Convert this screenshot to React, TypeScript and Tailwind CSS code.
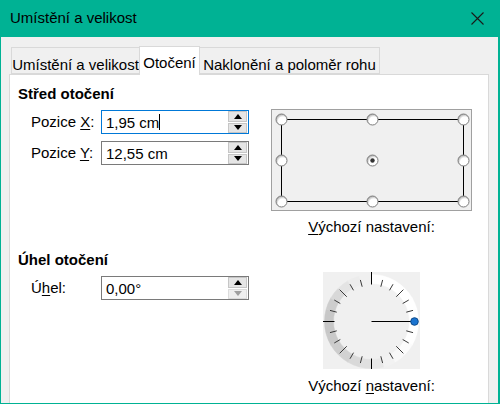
import React from 'react';

const FONT = { fontFamily: '"Liberation Sans", Arial, sans-serif' };

function SpinBox({ value, focused, caret, downDisabled }: { value: string; focused?: boolean; caret?: boolean; downDisabled?: boolean }) {
  return (
    <div
      className={`relative w-[148px] h-[24px] bg-white border flex items-center pl-[4px] ${
        focused ? 'border-[#0078d7]' : 'border-[#7a7a7a]'
      }`}
    >
      <span className="text-[15px] leading-none text-black">{value}</span>
      {caret && <span className="w-px h-[16px] bg-black" />}
      <div className="absolute right-px top-0 bottom-0 w-[19px] flex flex-col gap-px">
        <div className="flex-1 bg-[#e5e5e5] border border-[#c6c6c6] flex items-center justify-center">
          <svg width="8" height="5" viewBox="0 0 8 5">
            <path d="M0 5 L4 0 L8 5 Z" fill="#000" />
          </svg>
        </div>
        <div
          className={`flex-1 border flex items-center justify-center ${
            downDisabled ? 'bg-[#efefef] border-[#dcdcdc]' : 'bg-[#e5e5e5] border-[#c6c6c6]'
          }`}
        >
          <svg width="8" height="5" viewBox="0 0 8 5">
            <path d="M0 0 L8 0 L4 5 Z" fill={downDisabled ? '#a0a0a0' : '#000'} />
          </svg>
        </div>
      </div>
    </div>
  );
}

function Handle({ x, y, center }: { x: number; y: number; center?: boolean }) {
  return (
    <g>
      <circle cx={x} cy={y} r={5.5} fill="url(#knob)" stroke="#7d7d7d" strokeWidth={1} />
      {center && <circle cx={x} cy={y} r={2.2} fill="#333" />}
    </g>
  );
}

function PositionPreview() {
  const xs = [9.5, 100.5, 191.5];
  const ys = [9.5, 50.5, 91.5];
  return (
    <div className="w-[201px] h-[102px] border border-[#a0a0a0] bg-[#f0f0f0]">
      <svg width="199" height="100" viewBox="0 0 199 100">
        <defs>
          <radialGradient id="knob" cx="0.6" cy="0.65" r="0.7">
            <stop offset="0.55" stopColor="#ffffff" />
            <stop offset="1" stopColor="#9a9a9a" />
          </radialGradient>
        </defs>
        <rect x={9.5} y={9.5} width={182} height={82} fill="none" stroke="#000" strokeWidth={1} />
        {ys.map((y) =>
          xs.map((x) => <Handle key={`${x}-${y}`} x={x} y={y} center={x === 100.5 && y === 50.5} />)
        )}
      </svg>
    </div>
  );
}

// ring shading per 15 degree step, clockwise from 12 o'clock
const RING = [
  '#ffffff', '#ffffff', '#ffffff', '#ffffff', '#ffffff', '#ffffff',
  '#ffffff', '#ffffff', '#fcfcfc', '#f8f8f8', '#f2f2f2', '#e8e8e8',
  '#e0e0e0', '#d9d9d9', '#d2d2d2', '#cdcdcd', '#c9c9c9', '#c7c7c7',
  '#c8c8c8', '#cdcdcd', '#d8d8d8', '#e4e4e4', '#ececec', '#f0f0f0',
];

function Dial() {
  const cx = 48.5;
  const cy = 49.5;
  const pt = (deg: number, r: number) => {
    const a = (deg * Math.PI) / 180;
    return [cx + r * Math.sin(a), cy - r * Math.cos(a)];
  };
  const seg = (a0: number, a1: number, r1: number, r2: number) => {
    const [x1, y1] = pt(a0, r2);
    const [x2, y2] = pt(a1, r2);
    const [x3, y3] = pt(a1, r1);
    const [x4, y4] = pt(a0, r1);
    return `M${x1} ${y1} A${r2} ${r2} 0 0 1 ${x2} ${y2} L${x3} ${y3} A${r1} ${r1} 0 0 0 ${x4} ${y4} Z`;
  };
  const ticks = Array.from({ length: 24 }, (_, i) => i * 15);
  return (
    <div className="w-[97px] h-[97px] bg-[#f0f0f0]">
      <svg width="97" height="97" viewBox="0 0 97 97">
        {RING.map((c, i) => (
          <path key={i} d={seg(i * 15, i * 15 + 15, 38, 47)} fill={c} stroke={c} strokeWidth={0.5} />
        ))}
        {ticks.map((a) => {
          if (a === 90) return null;
          const major = a % 90 === 0;
          const mid = a % 45 === 0;
          const [r1, r2] = major ? [37, 50] : mid ? [35, 45] : [36, 43];
          const [x1, y1] = pt(a, r1);
          const [x2, y2] = pt(a, r2);
          return <line key={a} x1={x1} y1={y1} x2={x2} y2={y2} stroke={major ? '#000' : '#3a3a3a'} strokeWidth={1} />;
        })}
        <line x1={cx} y1={cy} x2={91} y2={cy} stroke="#000" strokeWidth={1} />
        <circle cx={91.5} cy={cy} r={3.8} fill="#1a73cf" stroke="#0d4a8a" strokeWidth={1} />
      </svg>
    </div>
  );
}

function Tab({ label, active, width }: { label: string; active?: boolean; width: string }) {
  return (
    <div
      className={`${width} -ml-px first:ml-0 flex justify-center border border-[#d9d9d9] text-[15px] text-black whitespace-nowrap ${
        active ? 'relative z-10 h-[29px] -mb-px bg-white border-b-0 pt-[5px]' : 'h-[27px] bg-[#f0f0f0] pt-[6px]'
      }`}
    >
      {label}
    </div>
  );
}

export default function App() {
  return (
    <div className="w-[500px] h-[404px] bg-[#00b294] flex flex-col pl-px pr-[2px] pb-px" style={FONT}>
      {/* Title bar */}
      <div className="h-[37px] shrink-0 flex items-center justify-between pl-[9px] pr-[14px]">
        <span className="text-[15px] text-black">Umístění a velikost</span>
        <svg width="13" height="13" viewBox="0 0 13 13">
          <path d="M0.5 0.5 L12.5 12.5 M12.5 0.5 L0.5 12.5" stroke="#1a1a1a" strokeWidth={1.1} />
        </svg>
      </div>

      {/* Dialog body */}
      <div className="flex-1 bg-[#f0f0f0] pl-[8px] pr-[9px] pt-[9px] flex flex-col min-h-0">
        <div className="flex items-end pl-[2px] h-[28px]">
          <Tab label="Umístění a velikost" width="w-[129px]" />
          <Tab label="Otočení" width="w-[61px]" active />
          <Tab label="Naklonění a poloměr rohu" width="w-[181px]" />
        </div>

        <div className="flex-1 bg-white border border-[#d9d9d9] border-b-0 pl-[8px] flex flex-col text-[15px] text-black">
          {/* Střed otočení */}
          <div className="flex items-start h-[162px]">
            <div className="w-[231px] mt-[9px] flex flex-col">
              <div className="font-bold h-[20px] leading-[20px]">Střed otočení</div>
              <div className="flex items-center mt-[6px] pl-[13px]">
                <span className="w-[70px]">
                  Pozice <span className="underline underline-offset-2">X</span>:
                </span>
                <SpinBox value="1,95 cm" focused caret />
              </div>
              <div className="flex items-center mt-[7px] pl-[13px]">
                <span className="w-[70px]">
                  Pozice <span className="underline underline-offset-2">Y</span>:
                </span>
                <SpinBox value="12,55 cm" />
              </div>
            </div>
            <div className="ml-[22px] mt-[34px] flex flex-col items-center">
              <PositionPreview />
              <div className="mt-[6px] h-[20px] leading-[20px]">
                <span className="underline underline-offset-2">V</span>ýchozí nastavení:
              </div>
            </div>
          </div>

          {/* Úhel otočení */}
          <div className="flex items-start">
            <div className="w-[231px] mt-[13px] flex flex-col">
              <div className="font-bold h-[20px] leading-[20px]">Úhel otočení</div>
              <div className="flex items-center mt-[6px] pl-[13px]">
                <span className="w-[70px]">
                  Ú<span className="underline underline-offset-2">h</span>el:
                </span>
                <SpinBox value="0,00°" downDisabled />
              </div>
            </div>
            <div className="ml-[22px] mt-[35px] w-[201px] flex flex-col items-center">
              <Dial />
              <div className="mt-[7px] h-[20px] leading-[20px]">
                Výchozí <span className="underline underline-offset-2">n</span>astavení:
              </div>
            </div>
          </div>
        </div>
      </div>
    </div>
  );
}
